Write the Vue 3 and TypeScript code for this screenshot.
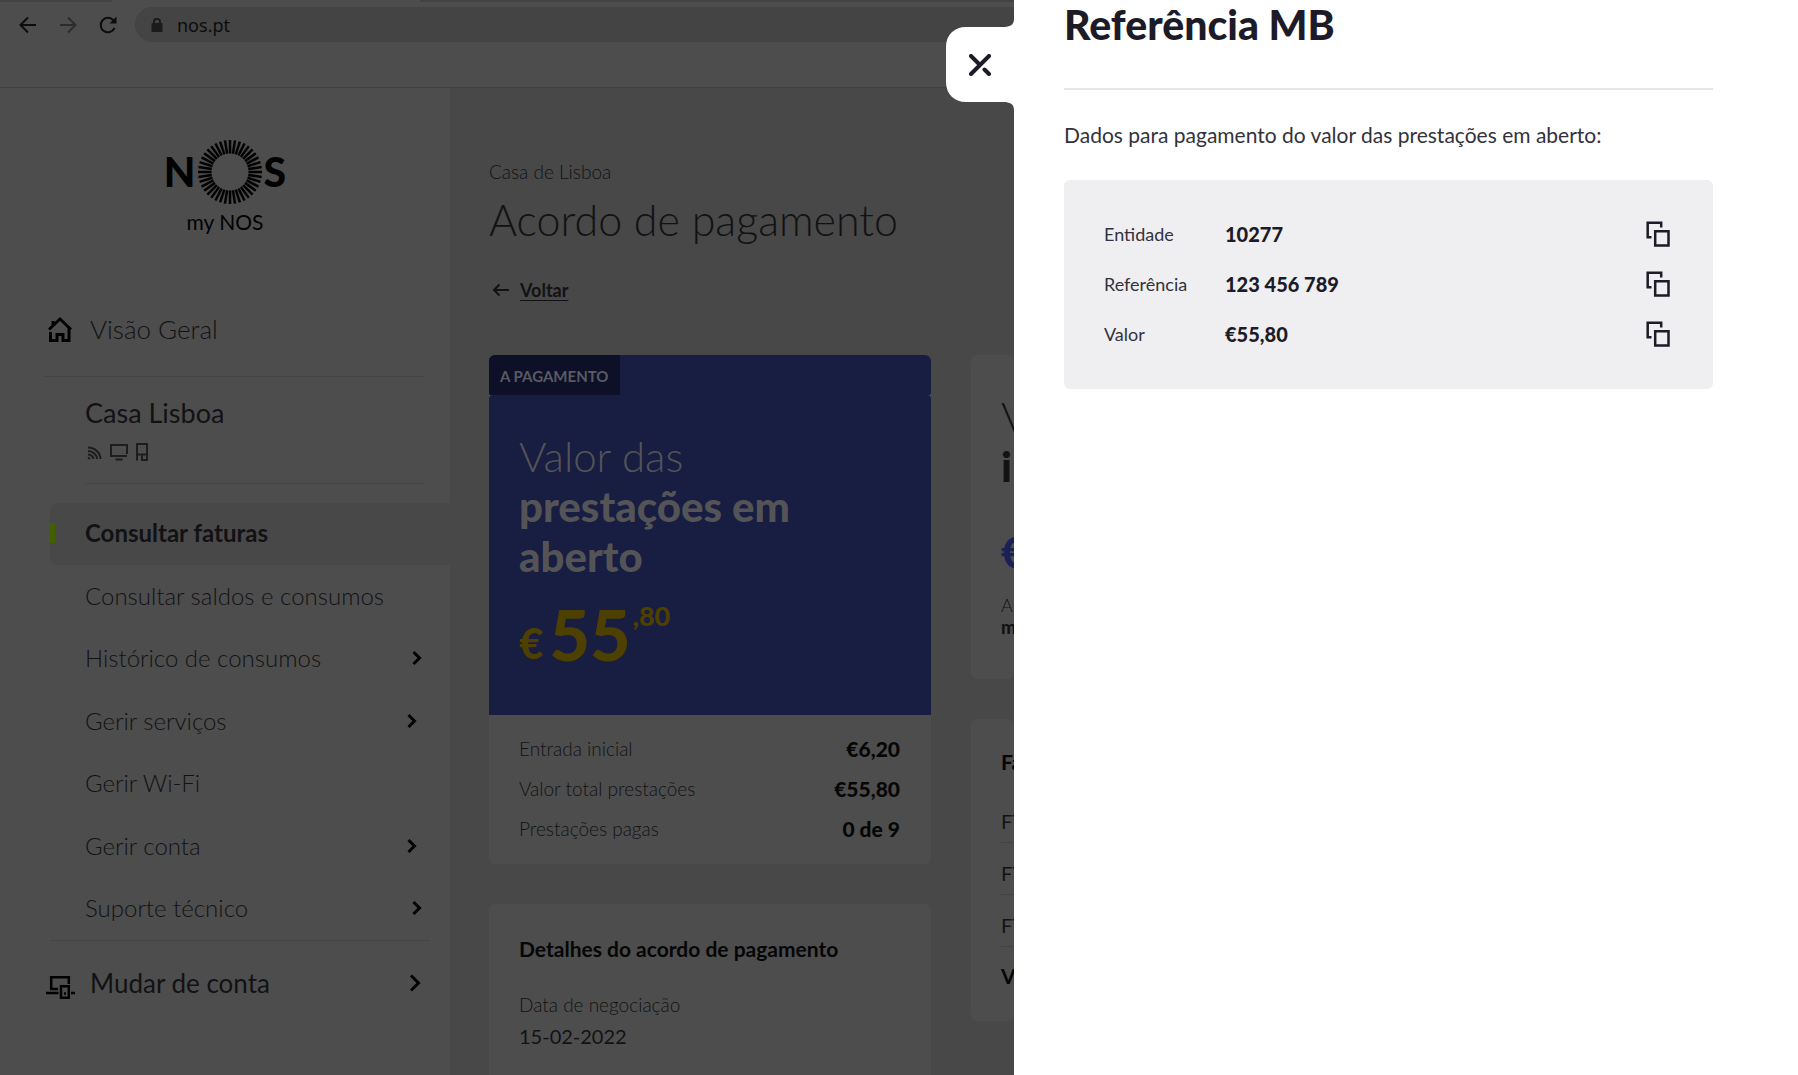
<script setup lang="ts">
import { ref } from 'vue'

interface NavItem {
  label: string
  active?: boolean
  arrow?: 'near' | 'far'
}

interface Field {
  label: string
  value: string
}

const navItems: NavItem[] = [
  { label: 'Consultar faturas', active: true },
  { label: 'Consultar saldos e consumos' },
  { label: 'Histórico de consumos', arrow: 'far' },
  { label: 'Gerir serviços', arrow: 'near' },
  { label: 'Gerir Wi-Fi' },
  { label: 'Gerir conta', arrow: 'near' },
  { label: 'Suporte técnico', arrow: 'far' },
]

const summary: Field[] = [
  { label: 'Entrada inicial', value: '€6,20' },
  { label: 'Valor total prestações', value: '€55,80' },
  { label: 'Prestações pagas', value: '0 de 9' },
]

const reference: Field[] = [
  { label: 'Entidade', value: '10277' },
  { label: 'Referência', value: '123 456 789' },
  { label: 'Valor', value: '€55,80' },
]

const invoices = ['FT', 'FT', 'FT']
const rays = Array.from({ length: 40 }, (_, i) => i * 9)
const address = ref('nos.pt')

function copy(value: string): void {
  navigator.clipboard?.writeText(value)
}
</script>

<template>
  <div class="screen">
    <div class="page">
      <header class="browser">
        <div class="tabs"><span class="tab"></span></div>
        <div class="toolbar">
          <button class="tool" type="button" aria-label="Retroceder">
            <svg width="18" height="18" viewBox="0 0 18 18"><path d="M17 9H2M9 1.500L1.500 9L9 16.500" /></svg>
          </button>
          <button class="tool faded" type="button" aria-label="Avançar">
            <svg width="18" height="18" viewBox="0 0 18 18"><path d="M1 9h15M9 1.500L16.500 9L9 16.500" /></svg>
          </button>
          <button class="tool" type="button" aria-label="Recarregar">
            <svg width="18" height="18" viewBox="0 0 18 18">
              <path d="M15.500 12A7.200 7.200 0 1 1 14.500 4.500" />
              <path class="solid" d="M17.500 0.500V7.500H10.500Z" />
            </svg>
          </button>
          <label class="omnibox">
            <svg width="12" height="14" viewBox="0 0 12 14">
              <rect x="0.500" y="5" width="11" height="9" rx="1" />
              <path d="M3 6V3.800a3 3 0 0 1 6 0V6" />
            </svg>
            <input v-model="address" type="text" aria-label="Endereço" />
          </label>
        </div>
      </header>

      <div class="body">
        <aside class="sidebar">
          <div class="logo">
            <span class="mark">
              <span>N</span>
              <svg width="64" height="64" viewBox="-32 -32 64 64">
                <line v-for="a in rays" :key="a" x1="0" y1="-32" x2="0" y2="-18.500" :transform="`rotate(${a})`" />
              </svg>
              <span>S</span>
            </span>
            <span class="sub">my NOS</span>
          </div>

          <a class="top-link" href="#">
            <svg width="30" height="26" viewBox="0 0 30 26">
              <path d="M3 13.500L14 3L25 13.500M7 9V5M4.500 16V24.500H11V18.500H17V24.500H23V12" />
            </svg>
            <span class="light">Visão Geral</span>
          </a>
          <hr class="rule wide" />

          <section class="home">
            <h2>Casa Lisboa</h2>
            <div class="services">
              <svg width="16" height="18" viewBox="0 0 16 18">
                <path d="M2 4.500C9 4.500 14.500 10 14.500 16M2 8C7 8 11 12 11 16M2 11.500C5 11.500 7.500 14 7.500 16M2 14.500L4 16" />
              </svg>
              <svg width="20" height="18" viewBox="0 0 20 18">
                <path d="M18 11V2H2V13H18M6.500 16.500H13.500" />
              </svg>
              <svg width="12" height="18" viewBox="0 0 12 18">
                <path d="M1 17.500V1H11V17H5M1 11.500H11M6 12V17" />
              </svg>
            </div>
          </section>
          <hr class="rule" />

          <nav class="nav">
            <a v-for="item in navItems" :key="item.label" href="#" :class="['item', { active: item.active }]">
              <span>{{ item.label }}</span>
              <svg v-if="item.arrow" :class="item.arrow" width="10" height="14" viewBox="0 0 10 14">
                <path d="M1.500 1L7.500 7L1.500 13" />
              </svg>
            </a>
          </nav>
          <hr class="rule last" />

          <a class="top-link switch" href="#">
            <svg width="30" height="34" viewBox="0 0 30 34">
              <path d="M12 23H5.200V11.200H22.800V18M0 27H12.500M25 27H29" />
              <path d="M15 20.200H22.800V31.800H15ZM18 27.500H20" />
            </svg>
            <span>Mudar de conta</span>
            <svg class="chev" width="12" height="18" viewBox="0 0 12 18"><path d="M2 1.500L9.500 9L2 16.500" /></svg>
          </a>
        </aside>

        <main class="main">
          <p class="crumb">Casa de Lisboa</p>
          <h1>Acordo de pagamento</h1>
          <a class="back" href="#">
            <svg width="18" height="14" viewBox="0 0 18 14"><path d="M17 7H2M7.500 1.500L2 7L7.500 12.500" /></svg>
            <span>Voltar</span>
          </a>

          <div class="cards">
            <div class="column">
              <section class="card">
                <div class="strip"><span class="badge">A PAGAMENTO</span></div>
                <div class="amount">
                  <h2 class="headline">Valor das<br /><strong>prestações em<br />aberto</strong></h2>
                  <p class="price"><span class="euro">€</span><span class="units">55</span><span class="cents">,80</span></p>
                </div>
                <dl class="summary">
                  <div v-for="row in summary" :key="row.label">
                    <dt>{{ row.label }}</dt>
                    <dd>{{ row.value }}</dd>
                  </div>
                </dl>
              </section>
              <section class="card details">
                <h3>Detalhes do acordo de pagamento</h3>
                <p class="label">Data de negociação</p>
                <p class="date">15-02-2022</p>
              </section>
            </div>

            <div class="column">
              <section class="card initial">
                <h2 class="headline">V<br /><strong>i</strong></h2>
                <p class="blue">€</p>
                <p class="note">A<br /><strong>m</strong></p>
              </section>
              <section class="card invoices">
                <h3>Fa</h3>
                <ul>
                  <li v-for="(invoice, i) in invoices" :key="i">{{ invoice }}</li>
                </ul>
                <h3>Ve</h3>
              </section>
            </div>
          </div>
        </main>
      </div>
    </div>

    <section class="drawer" role="dialog" aria-labelledby="drawer-title">
      <button class="close" type="button" aria-label="Fechar">
        <svg class="tab-shape" width="68" height="91" viewBox="0 0 68 91">
          <path d="M68 0C68 6 64 8 57 8H20C8 8 0 16 0 28V63C0 75 8 83 20 83H57C64 83 68 85 68 91Z" />
        </svg>
        <svg class="cross" width="22" height="22" viewBox="0 0 22 22">
          <path d="M2 2L11 11M20 2L2 20M15.500 15.500L20 20" />
        </svg>
      </button>
      <h1 id="drawer-title">Referência MB</h1>
      <p class="intro">Dados para pagamento do valor das prestações em aberto:</p>
      <dl class="fields">
        <div v-for="field in reference" :key="field.label">
          <dt>{{ field.label }}</dt>
          <dd>{{ field.value }}</dd>
          <dd>
            <button class="copy" type="button" :aria-label="`Copiar ${field.label}`" @click="copy(field.value)">
              <svg width="24" height="26" viewBox="0 0 24 26">
                <path d="M15.200 6.500V1.700H1.700V16.200H5.500M9.200 10.200H22.500V24.500H9.200Z" />
              </svg>
            </button>
          </dd>
        </div>
      </dl>
    </section>
  </div>
</template>

<style>
body {
  margin: 0;
  background: #fff;
}
</style>

<style scoped>
.screen {
  display: grid;
  grid-template-columns: minmax(0, 1fr) 784px;
  height: 100vh;
  overflow: hidden;
  font-family: Lato, "Liberation Sans", sans-serif;
  font-size: 20px;
  line-height: 28px;
}
.screen * {
  box-sizing: border-box;
}
h1, h2, h3, p, dl, dd, ul {
  margin: 0;
  padding: 0;
  font-weight: 400;
  list-style: none;
}
a {
  color: inherit;
  text-decoration: none;
}
button {
  padding: 0;
  border: 0;
  background: none;
  color: inherit;
  cursor: pointer;
}
svg {
  display: block;
  flex: none;
  fill: none;
  stroke: currentColor;
}

/* dimmed page */
.page {
  display: flex;
  flex-direction: column;
  overflow: hidden;
  background: #4d4d4d;
  color: #121214;
}
.browser {
  flex: none;
  height: 88px;
  border-bottom: 1px solid #404040;
}
.tabs {
  height: 2px;
  padding-left: 112px;
  background: #434343;
}
.tab {
  display: block;
  width: 308px;
  height: 2px;
  background: #4d4d4d;
}
.toolbar {
  display: flex;
  align-items: center;
  gap: 22px;
  padding: 5px 0 0 19px;
}
.tool {
  color: #0c0c0c;
  stroke-width: 2;
}
.faded {
  color: #2c2c2c;
}
.solid {
  fill: currentColor;
  stroke: none;
}
.omnibox {
  display: flex;
  flex: 1;
  align-items: center;
  gap: 14px;
  height: 35px;
  margin-left: -4px;
  padding-left: 16px;
  border-radius: 18px 0 0 18px;
  background: #444;
  color: #1b1b1b;
}
.omnibox svg {
  stroke-width: 2;
}
.omnibox rect {
  fill: currentColor;
  stroke: none;
}
.omnibox input {
  flex: 1;
  min-width: 0;
  padding: 0;
  border: 0;
  outline: 0;
  background: none;
  color: #0c0c0c;
  font: 18px/24px "Noto Sans", sans-serif;
}
.body {
  display: flex;
  flex: 1;
  min-height: 0;
}

/* sidebar */
.sidebar {
  flex: none;
  width: 450px;
}
.logo {
  display: flex;
  flex-direction: column;
  align-items: center;
  padding-top: 52px;
  color: #020202;
}
.mark {
  display: flex;
  align-items: center;
  gap: 2px;
  font-size: 41px;
  font-weight: 900;
  line-height: 64px;
}
.mark svg {
  stroke-width: 2.500;
}
.sub {
  margin-top: 4px;
  font-size: 21px;
}
.top-link {
  display: flex;
  align-items: center;
  gap: 14px;
  margin-top: 77px;
  padding-left: 46px;
  font-size: 26px;
  line-height: 32px;
}
.top-link svg {
  color: #020202;
  stroke-width: 3;
}
.light {
  font-weight: 300;
}
.rule {
  height: 1px;
  margin: 22px 26px 19px 85px;
  border: 0;
  background: #444;
}
.wide {
  margin: 31px 25px 20px 44px;
}
.last {
  margin: 0 20px 0 50px;
}
.home {
  padding-left: 85px;
}
.home h2 {
  font-size: 27px;
  line-height: 32px;
}
.services {
  display: flex;
  gap: 7px;
  margin-top: 14px;
  padding-left: 1px;
  color: #1d1d1d;
  stroke-width: 2;
}
.nav {
  display: flex;
  flex-direction: column;
  justify-content: space-between;
  min-height: 437px;
}
.item {
  display: flex;
  align-items: center;
  justify-content: space-between;
  height: 62px;
  margin-left: 50px;
  padding: 0 28px 2px 35px;
  font-size: 24px;
  font-weight: 300;
}
.item svg {
  color: #020202;
  stroke-width: 3;
}
.item .near {
  margin-right: 5px;
}
.active {
  border-radius: 8px 0 0 8px;
  background: #484848;
  font-weight: 700;
}
.active::before {
  content: "";
  flex: none;
  width: 5px;
  height: 20px;
  margin: 0 30px 0 -35px;
  background: #426000;
}
.active span {
  flex: 1;
}
.top-link.switch {
  margin-top: 25px;
}
.switch svg {
  stroke-width: 2.500;
}
.switch .chev {
  margin: 0 29px 0 auto;
  stroke-width: 3;
}

/* main column */
.main {
  display: flex;
  flex: 1;
  flex-direction: column;
  min-width: 0;
  padding: 72px 0 0 39px;
  overflow: hidden;
  background: #484848;
}
.crumb {
  font-size: 19px;
  font-weight: 300;
  line-height: 24px;
}
.main h1 {
  margin-top: 11px;
  font-size: 43px;
  font-weight: 300;
  line-height: 50px;
  white-space: nowrap;
}
.back {
  display: flex;
  align-items: center;
  gap: 10px;
  margin-top: 33px;
  padding-left: 3px;
  font-size: 18px;
  font-weight: 700;
  line-height: 24px;
}
.back svg {
  stroke-width: 2;
}
.back span {
  text-decoration: underline;
  text-underline-offset: 3px;
}
.cards {
  display: grid;
  flex: 1;
  grid-template-columns: 442px minmax(0, 1fr);
  gap: 40px;
  min-height: 0;
  margin-top: 53px;
}
.column {
  display: flex;
  flex-direction: column;
  gap: 40px;
}
.card {
  flex: none;
  overflow: hidden;
  border-radius: 6px;
  background: #4d4d4d;
}
.strip {
  display: flex;
  height: 40px;
  overflow: hidden;
  border-radius: 4px 4px 2px 2px;
  background: #181d42;
}
.badge {
  padding: 0 12px 0 11px;
  background: #0e1028;
  color: #5a5a62;
  font-size: 15px;
  font-weight: 700;
  line-height: 42px;
}
.amount {
  padding: 36px 30px 45px;
  border-radius: 4px 4px 0 0;
  background: #181d42;
  color: #545457;
}
.headline {
  font-size: 42px;
  font-weight: 300;
  line-height: 50px;
}
strong {
  font-weight: 900;
}
.price {
  display: flex;
  margin-top: 17px;
  color: #4d4000;
  font-weight: 900;
}
.euro {
  align-self: flex-end;
  font-size: 42px;
  line-height: 54px;
}
.units {
  margin: 0 2px 0 6px;
  font-size: 70px;
  line-height: 72px;
}
.cents {
  font-size: 27px;
  line-height: 36px;
}
.summary {
  padding: 14px 31px 15px 30px;
}
.summary div {
  display: flex;
  justify-content: space-between;
  line-height: 40px;
}
.summary dt,
.label {
  font-size: 19px;
  font-weight: 300;
}
.summary dd {
  color: #060606;
  font-size: 21px;
  font-weight: 900;
}
.card h3 {
  color: #060606;
  font-size: 21px;
  font-weight: 700;
}
.details {
  flex: 1 0 auto;
  padding: 31px 30px 0;
  border-radius: 6px 6px 0 0;
}
.label {
  margin-top: 30px;
  line-height: 24px;
}
.date {
  margin-top: 5px;
}
.initial {
  padding: 36px 0 41px 30px;
}
.blue {
  margin-top: 36px;
  color: #1b2154;
  font-size: 42px;
  font-weight: 900;
  line-height: 50px;
}
.note {
  margin-top: 17px;
  font-size: 18px;
  font-weight: 300;
  line-height: 22px;
}
.invoices {
  padding: 29px 0 31px 30px;
}
.invoices ul {
  margin: 15px 0;
}
.invoices li {
  padding: 16px 0 7px;
  border-bottom: 1px solid #434343;
}

/* drawer */
.drawer {
  position: relative;
  padding: 0 85px 0 50px;
  background: #fff;
  color: #1c1b27;
}
.drawer h1 {
  padding-bottom: 38px;
  border-bottom: 2px solid #e6e6e9;
  font-size: 41px;
  font-weight: 900;
  line-height: 50px;
}
.intro {
  margin-top: 31px;
  color: #33323c;
  font-size: 21px;
}
.close {
  position: absolute;
  top: 19px;
  left: -68px;
}
.tab-shape {
  fill: #fff;
  stroke: none;
}
.cross {
  position: absolute;
  top: 35px;
  left: 23px;
  stroke-linecap: round;
  stroke-width: 4;
}
.fields {
  margin-top: 31px;
  padding: 29px 43px 30px 40px;
  border-radius: 6px;
  background: #efeff1;
}
.fields div {
  display: grid;
  grid-template-columns: 121px 1fr auto;
  align-items: center;
  min-height: 50px;
}
.fields dt {
  color: #33323c;
  font-size: 18px;
}
.fields dd {
  font-weight: 900;
}
.copy {
  display: block;
  stroke-width: 2.500;
}
</style>
